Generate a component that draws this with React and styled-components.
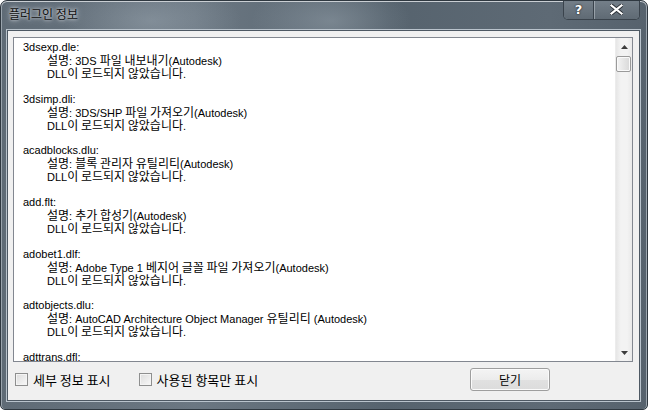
import React from 'react';
import styled, { createGlobalStyle } from 'styled-components';

const GlobalStyle = createGlobalStyle`
  html, body {
    margin: 0;
    padding: 0;
    background: #fff;
  }
  * {
    box-sizing: border-box;
  }
`;

const plugins = [
  { file: '3dsexp.dle', desc: '3DS 파일 내보내기(Autodesk)' },
  { file: '3dsimp.dli', desc: '3DS/SHP 파일 가져오기(Autodesk)' },
  { file: 'acadblocks.dlu', desc: '블록 관리자 유틸리티(Autodesk)' },
  { file: 'add.flt', desc: '추가 합성기(Autodesk)' },
  { file: 'adobet1.dlf', desc: 'Adobe Type 1 베지어 글꼴 파일 가져오기(Autodesk)' },
  { file: 'adtobjects.dlu', desc: 'AutoCAD Architecture Object Manager 유틸리티 (Autodesk)' },
  { file: 'adttrans.dfl', desc: null },
];

const Window = styled.div`
  width: 648px;
  height: 410px;
  display: flex;
  flex-direction: column;
  padding: 0 7px 8px 6px;
  border: 1px solid #2f3840;
  border-radius: 7px 7px 5px 5px;
  background:
    radial-gradient(ellipse 90px 40px at 150px 20px, rgba(160, 172, 182, 0.45), transparent),
    radial-gradient(ellipse 80px 40px at 330px 20px, rgba(150, 162, 172, 0.5), transparent),
    linear-gradient(90deg, #5f6b76 0%, #6b7782 30%, #56636e 60%, #5e6a75 85%, #56626d 100%);
  box-shadow: inset 0 1px 0 #c9ced3, inset 1px 0 0 #9aa4ad, inset -1px 0 0 #9aa4ad;
  font-family: "Liberation Sans", "Noto Sans CJK KR", sans-serif;
  overflow: hidden;
`;

const TitleBar = styled.div`
  height: 28px;
  display: flex;
  align-items: flex-start;
  justify-content: space-between;
  flex-shrink: 0;
`;

const Title = styled.div`
  padding: 5px 0 0 2px;
  font-family: "Noto Sans CJK KR", sans-serif;
  font-size: 12px;
  line-height: 16px;
  color: #111;
  text-shadow: 0 0 6px rgba(235, 240, 245, 0.9), 0 0 3px rgba(235, 240, 245, 0.9);
`;

const CaptionGroup = styled.div`
  display: flex;
  height: 20px;
  margin-top: -1px;
  border: 1px solid #3a434c;
  border-top: none;
  border-radius: 0 0 5px 5px;
  box-shadow: inset 0 0 0 1px rgba(210, 218, 225, 0.45);
  overflow: hidden;
`;

const CaptionButton = styled.div`
  width: ${(p) => p.$w}px;
  display: flex;
  align-items: center;
  justify-content: center;
  background: linear-gradient(#75808a, #5f6a74);
  border-left: ${(p) => (p.$divider ? '1px solid #3a434c' : 'none')};
  box-shadow: ${(p) => (p.$divider ? 'inset 1px 0 0 rgba(210,218,225,0.45)' : 'none')};
`;

const Content = styled.div`
  flex: 1;
  display: flex;
  flex-direction: column;
  background: #f0f0f0;
  border: 1px solid #4d5863;
  box-shadow: 0 0 0 1px #b9c3cc;
  margin-top: 1px;
`;

const ListBox = styled.div`
  height: 325px;
  flex-shrink: 0;
  margin: 6px 6px 0 5px;
  display: flex;
  border: 1px solid #828790;
  background: #fff;
`;

const ListBody = styled.div`
  flex: 1;
  overflow: hidden;
  padding: 3px 0 0 9px;
  font-size: 11px;
  line-height: 13px;
  color: #000;
`;

const Entry = styled.div`
  height: 51.7px;
`;

const Line = styled.div`
  height: 13px;
  white-space: nowrap;
  padding-left: ${(p) => (p.$indent ? '24px' : '0')};
`;

const Ko = styled.span`
  font-family: "Noto Sans CJK KR", sans-serif;
  font-size: 12px;
  line-height: 1;
`;

const ScrollBar = styled.div`
  width: 17px;
  display: flex;
  flex-direction: column;
  background: linear-gradient(90deg, #e6e6e6, #f3f3f3 30%, #f3f3f3 70%, #e9e9e9);
  border-left: 1px solid #ececec;
`;

const Arrow = styled.div`
  height: 17px;
  display: flex;
  align-items: center;
  justify-content: center;
`;

const Thumb = styled.div`
  height: 16px;
  margin: 1px 1px 0 0;
  border: 1px solid #9a9a9a;
  border-radius: 2px;
  background: linear-gradient(90deg, #f4f4f4, #e6e6e6 50%, #d8d8d8);
  box-shadow: inset 0 0 0 1px #fafafa;
`;

const Track = styled.div`
  flex: 1;
`;

const Footer = styled.div`
  flex: 1;
  display: flex;
  align-items: center;
  padding: 0 0 3px 7px;
`;

const CheckLabel = styled.label`
  display: flex;
  align-items: center;
  gap: 5px;
  margin-right: ${(p) => p.$gap}px;
  font-family: "Noto Sans CJK KR", sans-serif;
  font-size: 13px;
  line-height: 19px;
  color: #000;
  white-space: nowrap;
`;

const Box = styled.span`
  width: 13px;
  height: 13px;
  flex-shrink: 0;
  border: 1px solid #8e8f8f;
  background: linear-gradient(135deg, #dcdcdc, #f8f8f8);
  box-shadow: inset 0 0 0 1px #f4f4f4;
  display: inline-block;
`;

const Button = styled.button`
  width: 80px;
  height: 23px;
  margin-left: auto;
  margin-right: 89px;
  border: 1px solid #9e9e9e;
  border-radius: 3px;
  background: linear-gradient(#f4f4f4, #ececec 50%, #e1e1e1 51%, #dcdcdc);
  box-shadow: inset 0 0 0 1px #fbfbfb;
  font-family: "Noto Sans CJK KR", sans-serif;
  font-size: 12px;
  line-height: 19px;
  color: #000;
  padding: 0;
`;

const Glyph = styled.span`
  font-family: "DejaVu Sans", sans-serif;
  font-weight: bold;
  font-size: ${(p) => p.$size}px;
  color: #fff;
  text-shadow: 0 0 1px #222, 0 0 2px #222;
  line-height: 1;
`;

const hangul = /([\uAC00-\uD7A3]+(?:\s[\uAC00-\uD7A3]+)*)/;

const Mixed = ({ text }) =>
  text.split(hangul).map((part, i) =>
    i % 2 === 1 ? <Ko key={i}>{part}</Ko> : <React.Fragment key={i}>{part}</React.Fragment>
  );

export default function App() {
  return (
    <>
      <GlobalStyle />
      <Window>
        <TitleBar>
          <Title>플러그인 정보</Title>
          <CaptionGroup>
            <CaptionButton $w={29}>
              <Glyph $size={13}>?</Glyph>
            </CaptionButton>
            <CaptionButton $w={46} $divider>
              <svg width="13" height="11" viewBox="0 0 13 11">
                <path d="M1.5 1.5 L11.5 9.5 M11.5 1.5 L1.5 9.5" stroke="#2a2f35" strokeWidth="4" strokeLinecap="square" />
                <path d="M1.5 1.5 L11.5 9.5 M11.5 1.5 L1.5 9.5" stroke="#fff" strokeWidth="2.2" strokeLinecap="square" />
              </svg>
            </CaptionButton>
          </CaptionGroup>
        </TitleBar>
        <Content>
          <ListBox>
            <ListBody>
              {plugins.map((p) => (
                <Entry key={p.file}>
                  <Line>{p.file}:</Line>
                  {p.desc && (
                    <>
                      <Line $indent>
                        <Mixed text={`설명: ${p.desc}`} />
                      </Line>
                      <Line $indent>
                        <Mixed text="DLL이 로드되지 않았습니다." />
                      </Line>
                    </>
                  )}
                </Entry>
              ))}
            </ListBody>
            <ScrollBar>
              <Arrow>
                <svg width="7" height="4" viewBox="0 0 7 4">
                  <path d="M0 4 L3.5 0 L7 4 Z" fill="#3d3d3d" />
                </svg>
              </Arrow>
              <Thumb />
              <Track />
              <Arrow>
                <svg width="7" height="4" viewBox="0 0 7 4">
                  <path d="M0 0 L3.5 4 L7 0 Z" fill="#3d3d3d" />
                </svg>
              </Arrow>
            </ScrollBar>
          </ListBox>
          <Footer>
            <CheckLabel $gap={28}>
              <Box />
              세부 정보 표시
            </CheckLabel>
            <CheckLabel $gap={0}>
              <Box />
              사용된 항목만 표시
            </CheckLabel>
            <Button>닫기</Button>
          </Footer>
        </Content>
      </Window>
    </>
  );
}
